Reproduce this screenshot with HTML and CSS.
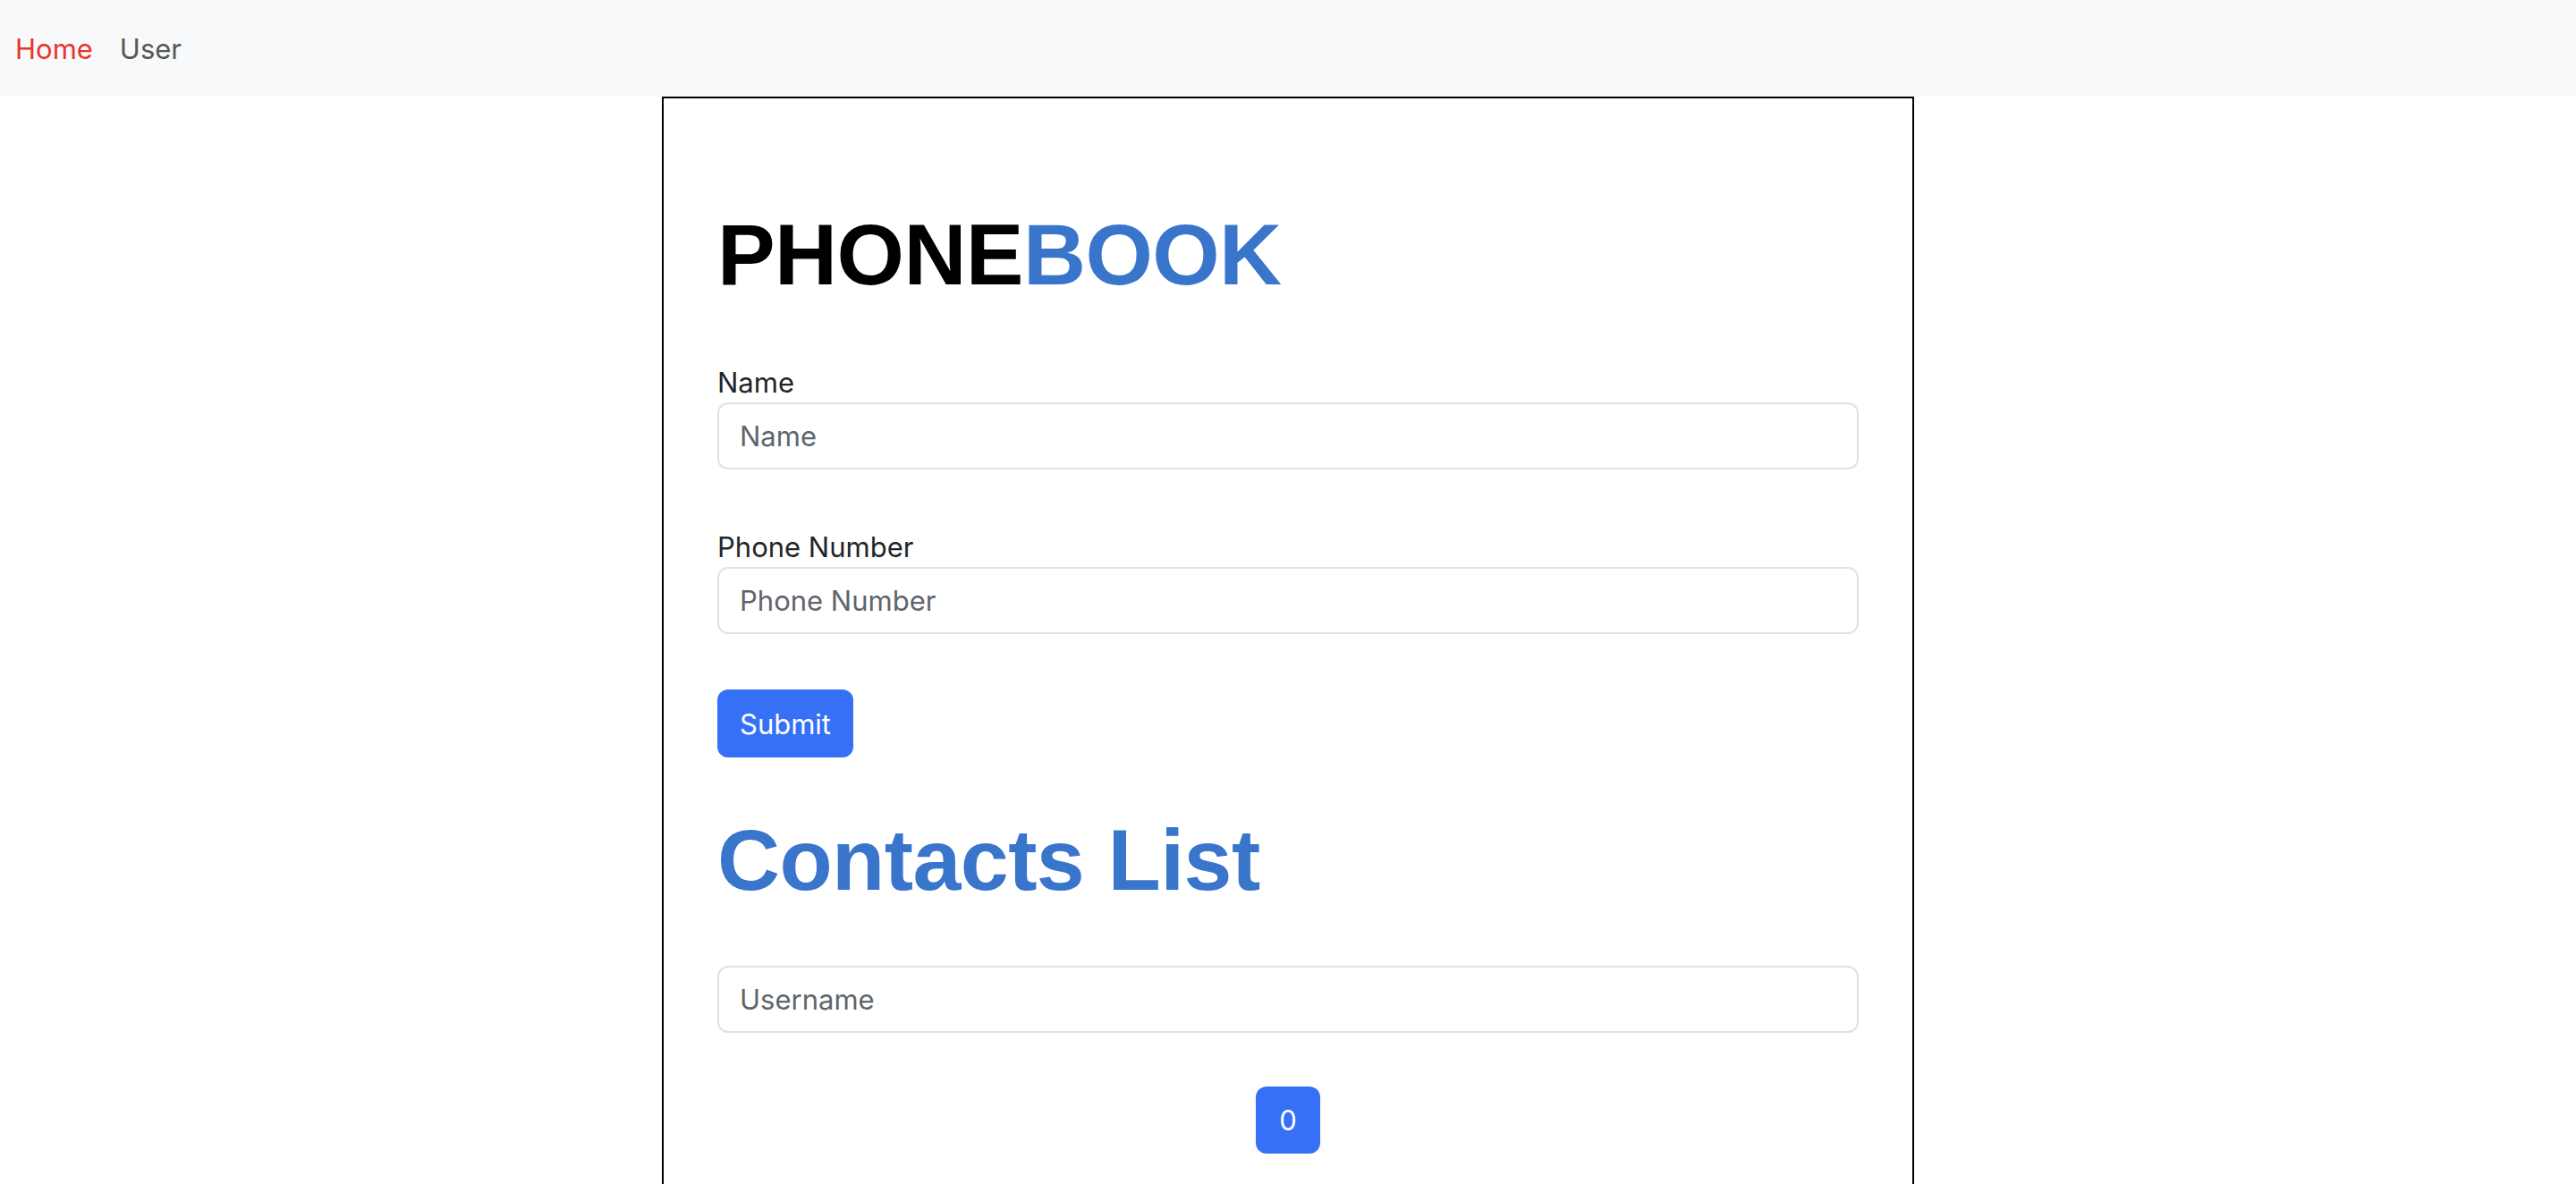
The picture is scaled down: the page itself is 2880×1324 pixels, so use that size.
FILE: index.html
```html
<!DOCTYPE html>
<html lang="en">
<head>
<meta charset="utf-8">
<title>Phonebook</title>
<link rel="stylesheet" href="styles.css">
</head>
<body>
<nav class="navbar">
  <a class="nav-link active" href="#">Home</a>
  <a class="nav-link" href="#">User</a>
</nav>
<main class="book">
  <h1 class="title"><span class="dark">PHONE</span><span class="blue">BOOK</span></h1>
  <form class="form">
    <div class="field">
      <label class="label" for="name">Name</label>
      <input class="input" id="name" type="text" placeholder="Name">
    </div>
    <div class="field">
      <label class="label" for="phone">Phone Number</label>
      <input class="input" id="phone" type="text" placeholder="Phone Number">
    </div>
    <button class="btn" type="button">Submit</button>
  </form>
  <h2 class="title blue list-title">Contacts List</h2>
  <input class="input search" type="text" placeholder="Username">
  <div class="pager">
    <button class="btn page" type="button">0</button>
  </div>
</main>
</body>
</html>
```

FILE: styles.css
```css
html, body {
  margin: 0;
  padding: 0;
  background: #ffffff;
}

body {
  font-family: Inter, "Noto Sans", "Liberation Sans", sans-serif;
  font-size: 31px;
  line-height: 1.5;
  color: #212529;
}

.navbar {
  height: 108px;
  background: #f8f9fa;
  display: flex;
  align-items: center;
  padding: 0 0 0 2px;
  box-sizing: border-box;
}

.nav-link {
  font-size: 31px;
  line-height: 45px;
  padding: 0 15px;
  color: #575757;
  text-decoration: none;
}

.nav-link.active {
  color: #e8352b;
}

.book {
  width: 1400px;
  box-sizing: border-box;
  margin: 0 auto;
  border: 2px solid #000;
  border-bottom: none;
  padding: 117px 60px 40px;
  min-height: 1216px;
}

.title {
  margin: 0;
  font-family: "Liberation Sans", Arial, Helvetica, sans-serif;
  font-weight: 700;
  font-size: 97px;
  line-height: 1.2;
  letter-spacing: -0.6px;
}

.dark { color: #000; }
.blue { color: #3a75cc; }

.form {
  margin-top: 62px;
  display: flex;
  flex-direction: column;
  align-items: flex-start;
}

.field {
  width: 100%;
  margin-bottom: 62px;
}

.field + .field {
  margin-top: 2px;
}

.label {
  display: block;
  line-height: 45px;
  margin-bottom: 0;
}

.input {
  display: block;
  width: 100%;
  height: 75px;
  box-sizing: border-box;
  border: 2px solid #dee2e6;
  border-radius: 12px;
  padding: 0 23px;
  font-family: inherit;
  font-size: 31px;
  color: #212529;
  background: #fff;
  outline: none;
}

.input::placeholder {
  color: #5f656c;
  opacity: 1;
}

.btn {
  height: 76px;
  border: none;
  border-radius: 12px;
  background: #3570f6;
  color: #fff;
  font-family: inherit;
  font-size: 31px;
  line-height: 45px;
  padding: 0 25px;
}

.list-title {
  margin-top: 57px;
}

.search {
  margin-top: 59px;
}

.pager {
  display: flex;
  justify-content: center;
  margin-top: 60px;
}

.page {
  width: 72px;
  height: 75px;
  padding: 0;
}
```
